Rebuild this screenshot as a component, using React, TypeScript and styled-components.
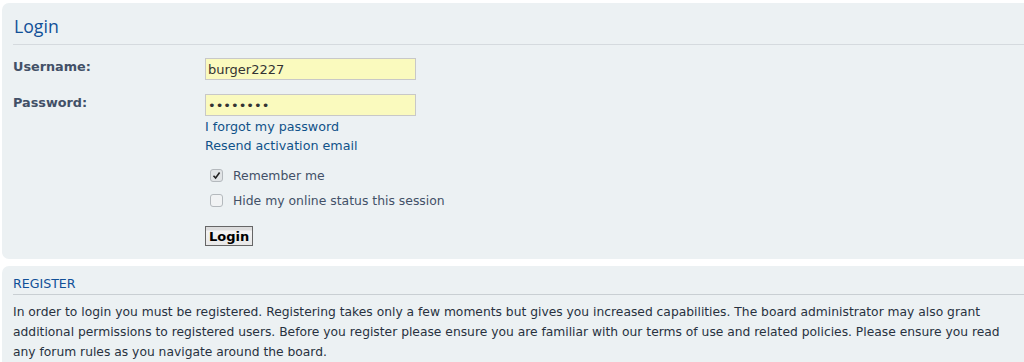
import React from "react";
import styled, { createGlobalStyle } from "styled-components";

const GlobalStyle = createGlobalStyle`
    body {
        margin: 0;
        background: #ffffff;
        font-family: "DejaVu Sans", Verdana, sans-serif;
        color: #28313f;
    }
`;

const Page = styled.div`
    width: 1040px;
    padding: 3px 0 0 2px;
    display: flex;
    flex-direction: column;
    gap: 7px;
`;

const Panel = styled.div<{ $pad?: string }>`
    background: #ecf1f3;
    border-radius: 7px;
    padding: ${(p) => p.$pad || "0 0 13px 11px"};
`;

const Heading = styled.h2`
    margin: 0;
    padding: 11px 0 6px 1px;
    font-family: "Open Sans", "DejaVu Sans", sans-serif;
    font-weight: normal;
    font-size: 17.7px;
    color: #115098;
    border-bottom: 1px solid #d5dade;
`;

const SubHeading = styled.h3`
    margin: 0;
    padding: 10px 0 3px 0;
    font-size: 12.6px;
    font-weight: normal;
    text-transform: uppercase;
    color: #115098;
    border-bottom: 1px solid #c9cfd3;
`;

const Form = styled.div`
    padding-top: 13px;
    display: flex;
    flex-direction: column;
    gap: 14px;
`;

const Row = styled.div`
    display: grid;
    grid-template-columns: 192px 1fr;
`;

const Label = styled.label`
    font-weight: bold;
    font-size: 12.8px;
    color: #425067;
    padding-top: 1px;
`;

const Field = styled.div`
    display: flex;
    flex-direction: column;
    align-items: flex-start;
`;

const Input = styled.input`
    box-sizing: border-box;
    width: 211px;
    height: 22px;
    margin: 0;
    padding: 0 0 0 2px;
    border: 1px solid #c8c8c8;
    background: #fafabe;
    font-family: "DejaVu Sans", Verdana, sans-serif;
    font-size: 13px;
    color: #333333;
    outline: none;
`;

const LinkText = styled.a`
    font-size: 12.7px;
    color: #105289;
    text-decoration: none;
    line-height: 19px;
`;

const Links = styled.div`
    display: flex;
    flex-direction: column;
    padding-top: 1px;
`;

const Checks = styled.div`
    display: flex;
    flex-direction: column;
    gap: 10px;
    padding: 13px 0 0 5px;
`;

const CheckRow = styled.label`
    display: flex;
    align-items: center;
    gap: 10px;
    font-size: 12.4px;
    color: #425067;
`;

const Box = styled.span<{ $on?: boolean }>`
    width: 11px;
    height: 11px;
    border: 1px solid #b4b9bd;
    border-radius: 3px;
    background: ${(p) => (p.$on ? "#e1e4e6" : "#f1f3f4")};
    display: flex;
    align-items: center;
    justify-content: center;
`;

const Button = styled.button`
    box-sizing: border-box;
    margin-top: 18px;
    height: 20px;
    padding: 0 3px;
    border: 1px solid #666666;
    background: linear-gradient(#dcdcdc 0, #dcdcdc 3px, #f4f4f4 4px, #e8e8e8);
    font-family: "DejaVu Sans", Verdana, sans-serif;
    font-weight: bold;
    font-size: 13px;
    line-height: 17px;
    color: #000000;
    border-radius: 0;
`;

const Para = styled.p`
    margin: 0;
    padding: 7px 0 0 0;
    font-size: 12.3px;
    line-height: 20px;
    width: 1008px;
    color: #28313f;
`;

const Tick = () => (
    <svg width="9" height="9" viewBox="0 0 9 9">
        <path d="M1.5 4.8 L3.6 7 L7.6 1.6" fill="none" stroke="#222" strokeWidth="1.6" />
    </svg>
);

const App = () => {
    return (
        <>
            <GlobalStyle />
            <Page>
                <Panel>
                    <Heading>Login</Heading>
                    <Form>
                        <Row>
                            <Label>Username:</Label>
                            <Field>
                                <Input defaultValue="burger2227" />
                            </Field>
                        </Row>
                        <Row>
                            <Label>Password:</Label>
                            <Field>
                                <Input type="password" defaultValue="password" />
                                <Links>
                                    <LinkText href="#">I forgot my password</LinkText>
                                    <LinkText href="#">Resend activation email</LinkText>
                                </Links>
                                <Checks>
                                    <CheckRow>
                                        <Box $on>
                                            <Tick />
                                        </Box>
                                        Remember me
                                    </CheckRow>
                                    <CheckRow>
                                        <Box />
                                        Hide my online status this session
                                    </CheckRow>
                                </Checks>
                                <Button>Login</Button>
                            </Field>
                        </Row>
                    </Form>
                </Panel>
                <Panel $pad="0 0 10px 11px">
                    <SubHeading>Register</SubHeading>
                    <Para>
                        In order to login you must be registered. Registering takes only a few moments but
                        gives you increased capabilities. The board administrator may also grant additional
                        permissions to registered users. Before you register please ensure you are familiar
                        with our terms of use and related policies. Please ensure you read any forum rules as
                        you navigate around the board.
                    </Para>
                </Panel>
            </Page>
        </>
    );
};

export default App;
